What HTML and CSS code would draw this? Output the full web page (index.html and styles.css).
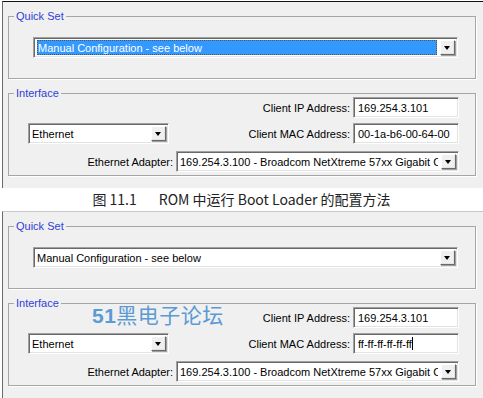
FILE: index.html
```html
<!DOCTYPE html>
<html>
<head>
    <title>ROM Boot Loader</title>
    <link rel="stylesheet" href="styles.css">
</head>
<body>

<div class="shot first">
    <div class="group quick">
        <span class="title">Quick Set</span>
        <div class="combo wide selected">
            <span class="value">Manual Configuration - see below</span>
            <span class="drop"><i></i></span>
        </div>
    </div>
    <div class="group iface">
        <span class="title">Interface</span>
        <div class="row right">
            <label>Client IP Address:</label>
            <div class="edit">169.254.3.101</div>
        </div>
        <div class="row split">
            <div class="combo small">
                <span class="value">Ethernet</span>
                <span class="drop"><i></i></span>
            </div>
            <div class="pair">
                <label>Client MAC Address:</label>
                <div class="edit">00-1a-b6-00-64-00</div>
            </div>
        </div>
        <div class="row right last">
            <label>Ethernet Adapter:</label>
            <div class="combo adapter">
                <span class="value">169.254.3.100 - Broadcom NetXtreme 57xx Gigabit Controller</span>
                <span class="drop"><i></i></span>
            </div>
        </div>
    </div>
</div>

<p class="caption"><span class="num">图 11.1</span>ROM 中运行 Boot Loader 的配置方法</p>

<div class="shot second">
    <div class="group quick">
        <span class="title">Quick Set</span>
        <div class="combo wide">
            <span class="value">Manual Configuration - see below</span>
            <span class="drop"><i></i></span>
        </div>
    </div>
    <div class="group iface">
        <span class="title">Interface</span>
        <div class="mark"><b>51</b>黑电子论坛</div>
        <div class="row right">
            <label>Client IP Address:</label>
            <div class="edit">169.254.3.101</div>
        </div>
        <div class="row split">
            <div class="combo small">
                <span class="value">Ethernet</span>
                <span class="drop"><i></i></span>
            </div>
            <div class="pair">
                <label>Client MAC Address:</label>
                <div class="edit">ff-ff-ff-ff-ff-ff<span class="caret"></span></div>
            </div>
        </div>
        <div class="row right last">
            <label>Ethernet Adapter:</label>
            <div class="combo adapter">
                <span class="value">169.254.3.100 - Broadcom NetXtreme 57xx Gigabit Controller</span>
                <span class="drop"><i></i></span>
            </div>
        </div>
    </div>
</div>

</body>
</html>
```
FILE: styles.css
```css
BODY {
    margin : 0;
    background : #fff;
    font-family : "Liberation Sans", Arial, sans-serif;
    font-size : 11px;
    color : #000;
    width : 483px;
    height : 398px;
    overflow : hidden;
}

.shot {
    margin-left : 2px;
    background : #f0f0f0;
    border-left : 1px solid #6a6a6a;
    padding : 0 0 0 5px;
    overflow : hidden;
}
.first {
    margin-top : 1px;
    border-top : 1px solid #111;
    height : 186px;
}
.second {
    border-top : 1px solid #c8c8c8;
    height : 187px;
}

/* group boxes */
.group {
    position : relative;
    box-sizing : border-box;
    width : 468px;
    margin-top : 14px;
    border : 1px solid #a6a6a6;
    box-shadow : 1px 1px 0 #fff;
}
.group .title {
    position : absolute;
    left : 5px;
    top : -8px;
    padding : 0 2px;
    background : #f0f0f0;
    color : #2e3fd8;
    line-height : 14px;
}
.quick {
    padding : 20px 0 20px 24px;
}
.iface {
    padding : 3px 16px 3px 19px;
}

/* controls */
.combo, .edit {
    position : relative;
    box-sizing : border-box;
    height : 21px;
    background : #fff;
    border : 1px solid;
    border-color : #a0a0a0 #fff #fff #a0a0a0;
    box-shadow : inset 1px 1px 0 #696969, inset -1px -1px 0 #e3e3e3;
    padding : 3px 0 0 3px;
    white-space : nowrap;
    overflow : hidden;
    line-height : 14px;
}
.combo .value {
    display : block;
    overflow : hidden;
    margin-right : 20px;
}
.selected .value {
    background : #3399ff;
    color : #fff;
    outline : 1px dotted #555;
    outline-offset : -1px;
    margin-top : -1px;
    padding : 1px 0 0 1px;
    height : 14px;
}
.drop {
    position : absolute;
    top : 2px;
    right : 2px;
    width : 15px;
    height : 15px;
    box-sizing : border-box;
    background : #f0f0f0;
    border : 1px solid;
    border-color : #fff #696969 #696969 #fff;
    box-shadow : -1px -1px 0 #e3e3e3 inset, 1px 1px 0 #a0a0a0;
}
.drop I {
    position : absolute;
    left : 3px;
    top : 5px;
    border-left : 3.5px solid transparent;
    border-right : 3.5px solid transparent;
    border-top : 4px solid #000;
}
.wide {
    width : 425px;
}
.small {
    width : 141px;
}
.adapter {
    width : 283px;
}
.edit {
    width : 106px;
    padding-left : 4px;
}
.caret {
    display : inline-block;
    width : 1px;
    height : 13px;
    background : #000;
    vertical-align : -2px;
}

.row {
    display : flex;
    align-items : center;
    gap : 3px;
}
.right {
    justify-content : flex-end;
}
.split {
    justify-content : space-between;
    margin-top : 5px;
}
.last {
    margin-top : 7px;
}
.pair {
    display : flex;
    align-items : center;
    gap : 3px;
}

.mark {
    position : absolute;
    left : 83px;
    top : -3px;
    color : #5b9bd5;
    font-family : "Noto Sans CJK SC", sans-serif;
    font-size : 21px;
    line-height : 26px;
    letter-spacing : 0.5px;
}
.mark B {
    font-family : "Liberation Sans", Arial, sans-serif;
    font-weight : bold;
}

.caption {
    margin : 0;
    height : 23px;
    line-height : 23px;
    text-align : center;
    font-family : "Noto Sans CJK SC", sans-serif;
    font-size : 14px;
    color : #222;
}
.caption .num {
    margin-right : 22px;
}
```
